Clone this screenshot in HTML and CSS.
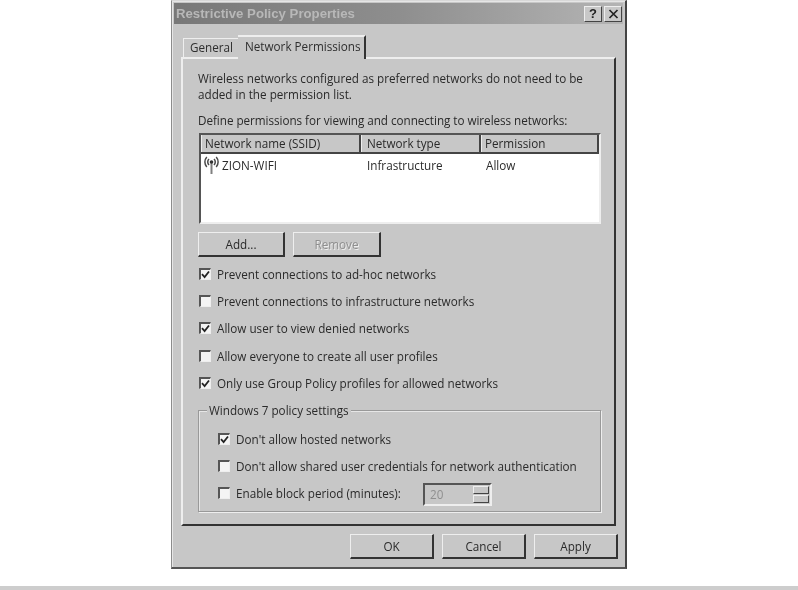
FILE: index.html
```html
<!DOCTYPE html>
<html lang="en">
<head>
<meta charset="utf-8">
<title>Restrictive Policy Properties</title>
<link rel="stylesheet" href="styles.css">
</head>
<body>
<div class="dialog">
  <div class="titlebar">
    <span class="title">Restrictive Policy Properties</span>
    <span class="capbtns">
      <span class="capbtn">?</span>
      <span class="capbtn capx"><svg width="11" height="10" viewBox="0 0 11 10"><path d="M1.5 1l8 8M9.5 1l-8 8" stroke="#222" stroke-width="1.7" fill="none"/></svg></span>
    </span>
  </div>
  <div class="tabs">
    <span class="tab">General</span>
    <span class="tab tab-active">Network Permissions</span>
  </div>
  <div class="pane">
    <p class="intro">Wireless networks configured as preferred networks do not need to be<br>added in the permission list.</p>
    <p class="define">Define permissions for viewing and connecting to wireless networks:</p>
    <div class="list">
      <div class="list-head">
        <span class="col col1">Network name (SSID)</span>
        <span class="col col2">Network type</span>
        <span class="col col3">Permission</span>
      </div>
      <div class="list-row">
        <span class="cell cell1">
          <svg class="wifi" width="15" height="18" viewBox="0 0 15 18"><g fill="none" stroke="#4a4a4a" stroke-width="1.5"><path d="M2.8 1a7.5 7.5 0 0 0 0 10"/><path d="M12.2 1a7.5 7.5 0 0 1 0 10"/><path d="M5 3a4.2 4.2 0 0 0 0 6"/><path d="M10 3a4.2 4.2 0 0 1 0 6"/></g><path d="M7.5 6v12" stroke="#808080" stroke-width="2"/><circle cx="7.5" cy="6" r="1.8" fill="#333"/></svg>
          ZION-WIFI
        </span>
        <span class="cell cell2">Infrastructure</span>
        <span class="cell cell3">Allow</span>
      </div>
    </div>
    <div class="list-btns">
      <span class="btn btn-list">Add...</span>
      <span class="btn btn-list btn-disabled">Remove</span>
    </div>
    <div class="checks">
      <label class="check"><span class="box box-on"><svg width="9" height="9" viewBox="0 0 9 9"><path d="M1 4.2l2.6 2.8L8 1.5" fill="none" stroke="#222" stroke-width="1.8"/></svg></span>Prevent connections to ad-hoc networks</label>
      <label class="check"><span class="box"></span>Prevent connections to infrastructure networks</label>
      <label class="check"><span class="box box-on"><svg width="9" height="9" viewBox="0 0 9 9"><path d="M1 4.2l2.6 2.8L8 1.5" fill="none" stroke="#222" stroke-width="1.8"/></svg></span>Allow user to view denied networks</label>
      <label class="check"><span class="box"></span>Allow everyone to create all user profiles</label>
      <label class="check"><span class="box box-on"><svg width="9" height="9" viewBox="0 0 9 9"><path d="M1 4.2l2.6 2.8L8 1.5" fill="none" stroke="#222" stroke-width="1.8"/></svg></span>Only use Group Policy profiles for allowed networks</label>
    </div>
    <div class="group">
      <span class="legend">Windows 7 policy settings</span>
      <label class="check check-g"><span class="box box-on"><svg width="9" height="9" viewBox="0 0 9 9"><path d="M1 4.2l2.6 2.8L8 1.5" fill="none" stroke="#222" stroke-width="1.8"/></svg></span>Don't allow hosted networks</label>
      <label class="check check-g"><span class="box"></span>Don't allow shared user credentials for network authentication</label>
      <div class="check check-g">
        <span class="box"></span><span class="block-label">Enable block period (minutes):</span>
        <span class="spin">
          <span class="spin-val">20</span>
          <span class="spin-btns"><span class="spin-btn"></span><span class="spin-btn"></span></span>
        </span>
      </div>
    </div>
  </div>
  <div class="actions">
    <span class="btn btn-act">OK</span>
    <span class="btn btn-act">Cancel</span>
    <span class="btn btn-act">Apply</span>
  </div>
</div>
<div class="rule"></div>
</body>
</html>
```
FILE: styles.css
```css
* { box-sizing: border-box; }
html, body { margin: 0; padding: 0; height: 590px; overflow: hidden; background: #fff; }
body { font-family: "Open Sans", "Noto Sans", sans-serif; font-size: 11.7px; color: #2a2a2a; position: relative; }
.dialog {
  width: 456px; height: 569px; margin-left: 171px;
  background: #c7c7c7;
  border: 1px solid #8c8c8c; border-top-color: #d8d8d8;
  border-right: 2px solid #444; border-bottom: 2px solid #555;
  box-shadow: inset 1px 1px 0 #e6e6e6;
  padding: 2px 2px 0 2px;
  display: flex; flex-direction: column;
  filter: blur(0.35px);
}
.titlebar {
  height: 21px; flex: none;
  background: linear-gradient(90deg, #787878 0%, #8e8e8e 50%, #b4b4b4 100%);
  display: flex; align-items: center; justify-content: space-between;
  padding: 0 1px 0 2px;
}
.title { font-family: "Liberation Sans", sans-serif; font-weight: 700; font-size: 13.2px; color: #b8b8b8; }
.capbtns { display: flex; gap: 2px; }
.capbtn {
  width: 18px; height: 16px; background: #c8c8c8;
  border: 1px solid; border-color: #eee #444 #444 #eee;
  display: flex; align-items: center; justify-content: center;
  font-family: "Liberation Sans", sans-serif; font-weight: 700; font-size: 13px; color: #222;
}
.tabs { display: flex; align-items: flex-end; height: 33px; flex: none; padding-left: 9px; }
.tab {
  height: 19px; width: 55px; padding: 0 0 0 6px; white-space: nowrap;
  background: #c7c7c7;
  border-top: 1px solid #eee; border-left: 1px solid #eee;
  color: #2e2e2e;
}
.tab-active {
  height: 24px; width: 128px; padding: 1px 0 0 7px;
  border-top: 2px solid #eee; border-left: 0;
  border-right: 2px solid #333;
  margin-bottom: -2px; position: relative; z-index: 1;
}
.pane {
  flex: none; margin-left: 7px; width: 435px; height: 469px;
  border: 2px solid; border-color: #eee #333 #333 #eee;
  padding: 11px 0 0 15px;
  position: relative;
}
.intro { margin: 0; line-height: 16px; width: 410px; }
.define { margin: 10px 0 0; line-height: 16px; letter-spacing: -0.04px; }
.list {
  width: 402px; height: 91px; margin: 5px 0 0 1px;
  background: #fff;
  border: 2px solid; border-color: #555 #eee #eee #555;
}
.list-head {
  display: flex; height: 19px; background: #c7c7c7;
  border-bottom: 2px solid #444;
}
.col { padding-left: 3px; line-height: 16px; border-right: 2px solid #444; border-left: 1px solid #eee; white-space: nowrap; }
.col1 { width: 160px; }
.col2 { width: 120px; padding-left: 5px; }
.col3 { width: 118px; }
.list-row { display: flex; padding-top: 2px; line-height: 18px; }
.cell { white-space: nowrap; }
.cell1 { width: 160px; padding-left: 3px; display: flex; align-items: flex-start; gap: 3px; }
.cell2 { width: 120px; padding-left: 6px; }
.cell3 { padding-left: 5px; }
.wifi { margin-top: 0; }
.list-btns { display: flex; gap: 8px; margin-top: 8px; }
.btn {
  display: flex; align-items: center; justify-content: center;
  background: #c7c7c7;
  border: 1px solid; border-color: #eee #333 #333 #eee;
  border-width: 1px 2px 2px 1px;
  white-space: nowrap;
}
.btn-list { width: 87px; height: 25px; }
.btn-list + .btn-list { width: 88px; }
.btn-disabled { color: #8f8f8f; text-shadow: 1px 1px 0 #eee; }
.checks { display: flex; flex-direction: column; margin-top: 3px; margin-left: 1px; }
.check { display: flex; align-items: center; height: 27.4px; white-space: nowrap; }
.box {
  width: 12px; height: 12px; flex: none; margin-right: 6px;
  background: #f4f4f4;
  border: 1px solid; border-color: #555 #eee #eee #555;
  border-width: 2px 1px 1px 2px;
  display: flex; align-items: center; justify-content: center;
}
.group {
  position: relative; width: 403px; height: 102px; margin-top: 13px;
  border: 1px solid #999; box-shadow: 1px 1px 0 #eee, inset 1px 1px 0 #e6e6e6;
  padding: 15px 0 0 19px;
}
.legend {
  position: absolute; left: 8px; top: -8px; padding: 0 2px; background: #c7c7c7; line-height: 15px;
}
.check-g { height: 27px; }
.block-label { width: 187px; }
.spin {
  width: 69px; height: 23px; display: flex; align-items: center; justify-content: space-between;
  border: 2px solid; border-color: #555 #eee #eee #555; background: #c7c7c7;
  padding: 0 1px 0 5px; color: #8f8f8f; margin-top: 2px;
}
.spin-btns { display: flex; flex-direction: column; gap: 1px; width: 16px; }
.spin-btn { height: 8px; background: #c7c7c7; border: 1px solid; border-color: #eee #444 #444 #eee; }
.actions { display: flex; justify-content: flex-end; gap: 8px; margin-top: 8px; padding-right: 5px; }
.btn-act { width: 84px; height: 25px; }
.rule { position: absolute; left: 0; right: 0; bottom: 0; height: 4px; background: #cdcdcd; }
```
